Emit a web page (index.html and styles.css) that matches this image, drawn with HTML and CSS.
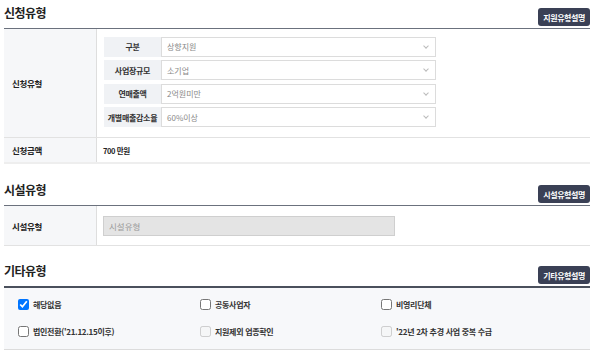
FILE: index.html
```html
<!DOCTYPE html>
<html lang="ko">
<head>
    <meta charset="UTF-8">
    <meta name="viewport" content="width=device-width, initial-scale=1.0">
    <title>신청유형</title>
    <link rel="stylesheet" href="styles.css">
</head>
<body>
    <div class="page">
        <div class="section-head first">
            <h2>신청유형</h2>
            <button class="help-btn">지원유형설명</button>
        </div>
        <div class="form-table">
            <div class="row apply-row">
                <div class="label">신청유형</div>
                <div class="value">
                    <div class="sub-table">
                        <div class="sub-label">구분</div>
                        <div class="select">상향지원<span class="chev"></span></div>
                        <div class="sub-label">사업장규모</div>
                        <div class="select">소기업<span class="chev"></span></div>
                        <div class="sub-label">연매출액</div>
                        <div class="select">2억원미만<span class="chev"></span></div>
                        <div class="sub-label">개별매출감소율</div>
                        <div class="select">60%이상<span class="chev"></span></div>
                    </div>
                </div>
            </div>
            <div class="row amount-row">
                <div class="label">신청금액</div>
                <div class="value amount">700 만원</div>
            </div>
        </div>

        <div class="section-head">
            <h2>시설유형</h2>
            <button class="help-btn">시설유형설명</button>
        </div>
        <div class="form-table">
            <div class="row facility-row">
                <div class="label">시설유형</div>
                <div class="value">
                    <input type="text" class="text-input" value="시설유형" disabled>
                </div>
            </div>
        </div>

        <div class="section-head last">
            <h2>기타유형</h2>
            <button class="help-btn">기타유형설명</button>
        </div>
        <div class="check-box">
            <label class="check"><input type="checkbox" checked> 해당없음</label>
            <label class="check"><input type="checkbox"> 공동사업자</label>
            <label class="check"><input type="checkbox"> 비영리단체</label>
            <label class="check"><input type="checkbox"> 법인전환('21.12.15이후)</label>
            <label class="check"><input type="checkbox" disabled> 지원제외 업종확인</label>
            <label class="check"><input type="checkbox" disabled> '22년 2차 추경 사업 중복 수급</label>
        </div>
    </div>
</body>
</html>
```

FILE: styles.css
```css
* {
    box-sizing: border-box;
}

body {
    margin: 0;
    font-family: "Noto Sans CJK KR", "Noto Sans", sans-serif;
    color: #222;
    background-color: #fff;
}

.page {
    width: 586px;
    margin-left: 4px;
}

.section-head {
    display: flex;
    justify-content: space-between;
    align-items: flex-end;
    height: 41px;
    padding-bottom: 2px;
}

.section-head.first {
    height: 28px;
}

.section-head.last {
    height: 40px;
}

.section-head h2 {
    margin: 0 0 6px 0;
    font-size: 12px;
    line-height: 14px;
    font-weight: bold;
    color: #222;
    letter-spacing: -0.5px;
}

.help-btn {
    height: 18px;
    padding: 0 5px;
    border: none;
    border-radius: 3px;
    background-color: #3a4055;
    color: #fff;
    font-family: inherit;
    font-size: 8px;
    font-weight: bold;
    letter-spacing: -0.4px;
    cursor: pointer;
}

.form-table {
    border-top: 1px solid #6b717d;
}

.row {
    display: flex;
    border-bottom: 1px solid #e2e2e2;
}

.label {
    width: 93px;
    display: flex;
    align-items: center;
    padding-left: 8px;
    background-color: #f6f7f9;
    border-right: 1px solid #dedede;
    font-size: 8.5px;
    font-weight: bold;
    letter-spacing: -0.3px;
}

.value {
    flex: 1;
    display: flex;
    align-items: center;
}

.apply-row {
    height: 109px;
}

.apply-row .value {
    padding: 7px 0 9px 7px;
}

.sub-table {
    display: grid;
    grid-template-columns: 57px 275px;
    row-gap: 3.5px;
}

.sub-label {
    height: 20px;
    display: flex;
    align-items: center;
    justify-content: center;
    background-color: #f0f2f5;
    font-size: 8px;
    font-weight: bold;
    letter-spacing: -0.3px;
    color: #333;
}

.select {
    position: relative;
    height: 20px;
    display: flex;
    align-items: center;
    padding-left: 5px;
    border: 1px solid #dcdcdc;
    font-size: 8px;
    color: #888;
}

.chev {
    position: absolute;
    right: 7px;
    top: 6px;
    width: 4px;
    height: 4px;
    border-right: 1px solid #bbb;
    border-bottom: 1px solid #bbb;
    transform: rotate(45deg);
}

.amount-row {
    height: 26px;
    border-bottom: 2px solid #eeeeee;
}

.amount {
    padding-left: 6px;
    font-size: 7.5px;
    font-weight: bold;
    letter-spacing: -0.4px;
}

.facility-row {
    height: 40px;
}

.facility-row .value {
    padding-left: 6px;
}

.text-input {
    width: 292px;
    height: 20px;
    padding: 0 5px;
    border: 1px solid #cfcfcf;
    background-color: #e4e4e4;
    font-family: inherit;
    font-size: 8.5px;
    color: #999;
}

.check-box {
    display: grid;
    grid-template-columns: 182px 181px 1fr;
    row-gap: 13px;
    padding: 9px 0 11px 14px;
    border-top: 2px solid #4a505c;
    border-bottom: 1px solid #dcdcdc;
    background-color: #f7f8fa;
}

.check {
    display: flex;
    align-items: center;
    height: 14px;
    font-size: 8px;
    font-weight: bold;
    letter-spacing: -0.3px;
    color: #333;
}

.check input {
    width: 11px;
    height: 11px;
    margin: 0 4px 0 0;
}
```
